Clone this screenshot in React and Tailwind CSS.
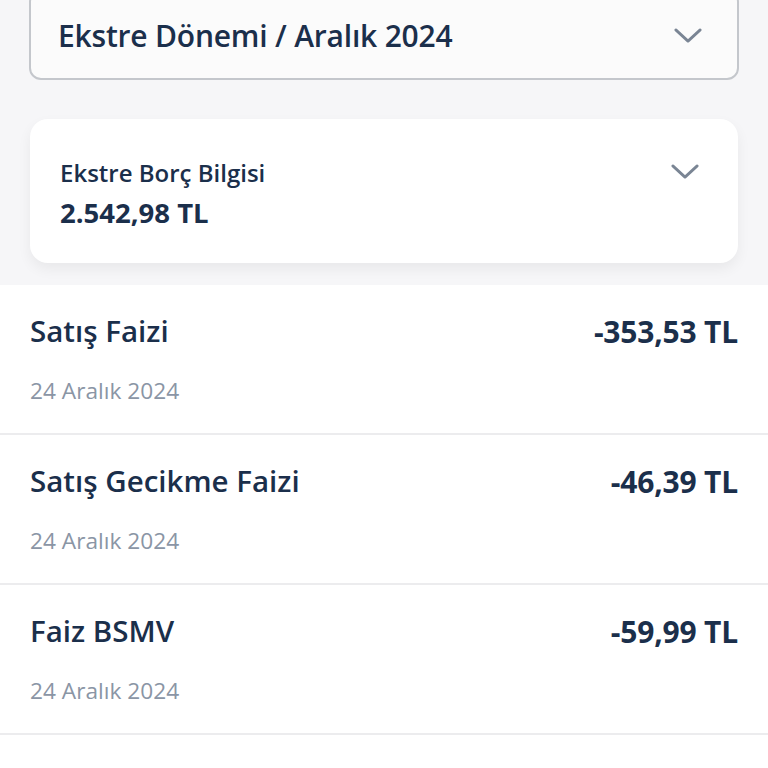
import React from "react";

const font = { fontFamily: '"Open Sans", "Noto Sans", sans-serif' };

const Chevron = ({ className }) => (
  <svg viewBox="0 0 32 20" className={className} fill="none" stroke="currentColor" strokeWidth="3" strokeLinecap="round" strokeLinejoin="round">
    <path d="M3 4 L16 16 L29 4" />
  </svg>
);

const rows = [
  { title: "Satış Faizi", amount: "-353,53 TL", date: "24 Aralık 2024" },
  { title: "Satış Gecikme Faizi", amount: "-46,39 TL", date: "24 Aralık 2024" },
  { title: "Faiz BSMV", amount: "-59,99 TL", date: "24 Aralık 2024" },
];

export default function App() {
  return (
    <div className="w-[768px] h-[768px] overflow-hidden bg-white text-[#1b2f4b]" style={font}>
      <div className="bg-[#f6f6f8] h-[285px] px-[29px] flex flex-col">
        <div className="-mt-[10px] h-[90px] rounded-[12px] border-2 border-[#c4c7cc] bg-[#fbfbfb] flex items-center justify-between pl-[27px] pr-[34px]">
          <span className="text-[30px] font-semibold tracking-[-0.2px]">Ekstre Dönemi / Aralık 2024</span>
          <Chevron className="w-[30px] h-[19px] text-[#7a8594]" />
        </div>
        <div className="mt-[39px] mx-px h-[144px] rounded-[18px] bg-white shadow-[0_6px_14px_rgba(0,0,0,0.06)] pl-[30px] pr-[38px] flex justify-between">
          <div className="pt-[38px] flex flex-col">
            <span className="text-[24px] font-semibold leading-[32px]">Ekstre Borç Bilgisi</span>
            <span className="text-[27.5px] font-bold leading-[36px] mt-[6px]">2.542,98 TL</span>
          </div>
          <Chevron className="mt-[43px] w-[30px] h-[19px] text-[#7a8594]" />
        </div>
      </div>
      <div className="flex flex-col">
        {rows.map((r) => (
          <div key={r.title} className="h-[150px] border-b-[2px] border-[#ececee] px-[30px] flex flex-col">
            <div className="flex justify-between items-center mt-[26px] h-[40px]">
              <span className="text-[29.5px] font-semibold">{r.title}</span>
              <span className="text-[30px] font-bold tracking-[-0.2px]">{r.amount}</span>
            </div>
            <span className="mt-[25px] text-[22.7px] text-[#8a95a5] leading-[30px]">{r.date}</span>
          </div>
        ))}
      </div>
    </div>
  );
}
